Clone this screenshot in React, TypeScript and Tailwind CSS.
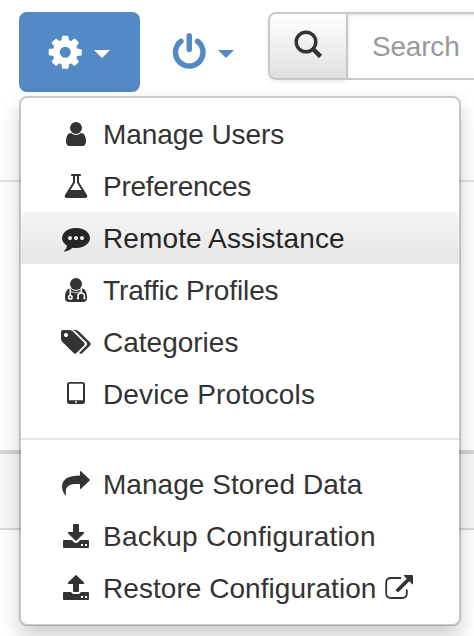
import React from "react";

type IconProps = { children: React.ReactNode; className?: string };

function Glyph({ children, className = "size-7" }: IconProps) {
  return (
    <svg viewBox="0 0 28 28" fill="currentColor" className={`shrink-0 overflow-visible ${className}`}>
      {children}
    </svg>
  );
}

function Fa({ d, className, dx = 0 }: { d: string; className?: string; dx?: number }) {
  return (
    <Glyph className={className}>
      <path transform={`translate(${dx} 0) scale(0.015625)`} d={d} />
    </Glyph>
  );
}

const COG =
  "M1152 896q0-106-75-181t-181-75-181 75-75 181 75 181 181 75 181-75 75-181zm512-109v222q0 12-8 23t-20 13l-185 28q-19 54-39 91 35 50 107 138 10 12 10 25t-9 23q-27 37-99 108t-94 71q-12 0-26-9l-138-108q-44 23-91 38-16 136-29 186-7 28-36 28h-222q-14 0-24.5-8.5t-11.5-21.5l-28-184q-49-16-90-37l-141 107q-10 9-25 9-14 0-25-11-126-114-165-168-7-10-7-23 0-12 8-23 15-21 51-66.5t54-70.5q-27-50-41-99l-183-27q-13-2-21-12.5t-8-23.5v-222q0-12 8-23t19-13l186-28q14-46 39-92-40-57-107-138-10-12-10-24 0-10 9-23 26-36 98.5-107.5t94.5-71.5q13 0 26 10l138 107q44-23 91-38 16-136 29-186 7-28 36-28h222q14 0 24.5 8.5t11.5 21.5l28 184q49 16 90 37l142-107q9-9 24-9 13 0 25 10 129 119 165 170 7 8 7 22 0 12-8 23-15 21-51 66.5t-54 70.5q26 50 41 98l183 28q13 2 21 12.5t8 23.5z";
const POWER =
  "M1664 896q0 156-61 298t-164 245-245 164-298 61-298-61-245-164-164-245-61-298q0-182 80.5-343t226.5-270q43-32 95.5-25t83.5 50q32 42 24.5 94.5t-49.5 84.5q-98 74-151.5 181t-53.5 228q0 104 40.5 198.5t109.5 163.5 163.5 109.5 198.5 40.5 198.5-40.5 163.5-109.5 109.5-163.5 40.5-198.5q0-121-53.5-228t-151.5-181q-42-32-49.5-84.5t24.5-94.5q31-43 84-50t95 25q146 109 226.5 270t80.5 343zm-640-768v640q0 52-38 90t-90 38-90-38-38-90v-640q0-52 38-90t90-38 90 38 38 90z";
const USER =
  "M1536 1399q0 109-62.5 187t-150.5 78h-854q-88 0-150.5-78t-62.5-187q0-85 8.5-160.5t31.5-152 58.5-131 94-89 134.5-34.5q131 128 313 128t313-128q76 0 134.5 34.5t94 89 58.5 131 31.5 152 8.5 160.5zm-256-887q0 159-112.5 271.5t-271.5 112.5-271.5-112.5-112.5-271.5 112.5-271.5 271.5-112.5 271.5 112.5 112.5 271.5z";
const FLASK =
  "M1591 1448q56 89 21.5 152.5t-140.5 63.5h-1152q-106 0-140.5-63.5t21.5-152.5l503-793v-399h-64q-26 0-45-19t-19-45 19-45 45-19h512q26 0 45 19t19 45-19 45-45 19h-64v399zm-779-725l-272 429h712l-272-429-20-31v-436h-128v436z";
const COMMENT =
  "M640 896q0-53-37.5-90.5t-90.5-37.5-90.5 37.5-37.5 90.5 37.5 90.5 90.5 37.5 90.5-37.5 37.5-90.5zm384 0q0-53-37.5-90.5t-90.5-37.5-90.5 37.5-37.5 90.5 37.5 90.5 90.5 37.5 90.5-37.5 37.5-90.5zm384 0q0-53-37.5-90.5t-90.5-37.5-90.5 37.5-37.5 90.5 37.5 90.5 90.5 37.5 90.5-37.5 37.5-90.5zm384 0q0 174-120 321.5t-326 233-450 85.5q-110 0-211-18-173 173-435 229-52 10-86 13-12 1-22-6t-13-18q-4-15 20-37 5-5 23.5-21.5t25.5-23.5 23.5-25.5 24-31.5 20.5-37 20-48 14.5-57.5 12.5-72.5q-146-90-229.5-216.5t-83.5-269.5q0-174 120-321.5t326-233 450-85.5 450 85.5 326 233 120 321.5z";
const TAGS =
  "M448 448q0-53-37.5-90.5t-90.5-37.5-90.5 37.5-37.5 90.5 37.5 90.5 90.5 37.5 90.5-37.5 37.5-90.5zm1067 576q0 53-37 90l-491 492q-39 37-91 37-53 0-90-37l-715-716q-38-37-64.5-101t-26.5-117v-416q0-52 38-90t90-38h416q53 0 117 26.5t102 64.5l715 714q37 39 37 91zm384 0q0 53-37 90l-491 492q-39 37-91 37-36 0-59-14t-53-45l470-470q37-37 37-90 0-52-37-91l-715-714q-38-38-102-64.5t-117-26.5h224q53 0 117 26.5t102 64.5l715 714q37 39 37 91z";

function UserMd() {
  return (
    <Glyph>
      <circle cx="14" cy="8" r="6" />
      <path d="M8.3 12.3Q14 17.5 19.7 12.3C23.5 13 25 17 25 21.7Q25 26 21 26H7Q3 26 3 21.7C3 17 4.5 13 8.3 12.3Z" />
      <g fill="none" stroke="#fff" strokeWidth="1.5">
        <path d="M8.3 12.6V19.4M19.3 12.6V16.5M16 22V20Q16 17 19.2 17T22.4 20V22" />
        <path d="M8.3 14.8Q14 18.8 19.5 14.8" strokeWidth=".7" />
        <circle cx="8.3" cy="21.2" r="1.8" />
      </g>
      <circle cx="16" cy="22.3" r="1.1" fill="#fff" />
      <circle cx="22.4" cy="22.3" r="1.1" fill="#fff" />
    </Glyph>
  );
}

function Tablet() {
  return (
    <Glyph>
      <path fillRule="evenodd" d="M7.5 2H20.5Q23 2 23 4.500V21.500Q23 24 20.500 24H7.500Q5 24 5 21.500V4.500Q5 2 7.500 2ZM7.600 3.800Q7 3.800 7 4.400V19.700Q7 20.200 7.600 20.200H20.400Q21 20.200 21 19.700V4.400Q21 3.800 20.400 3.800ZM14 21A1 1 0 1 0 14 23A1 1 0 1 0 14 21Z" />
    </Glyph>
  );
}

function ShareArrow() {
  return (
    <Glyph>
      <path d="M18 1.5Q18 .5 19 1.2L27.500 9.300Q28.200 10 27.500 10.700L19 18.800Q18 19.500 18 18.500V14.200C9.500 13.600 4.500 15.300 3.800 20.500Q3.600 22.500 4.100 24.700Q4.200 25.700 3.300 25.200C1 22.500 0 19.500 0 16.800C.2 8.500 7 5.700 18 5.500Z" />
    </Glyph>
  );
}

function Tray({ up = false }: { up?: boolean }) {
  return (
    <Glyph>
      {up ? (
        <>
          <path d="M14.700 1.400L22 8.600Q22.600 9.800 21.400 9.900H17V17Q17 18 16 18H12Q11 18 11 17V9.900H6.600Q5.400 9.800 6 8.600L13.300 1.400Q14 .8 14.700 1.400Z" />
          <path fillRule="evenodd" d="M2 18H9.200Q9.700 20 12 20H16Q18.300 20 18.800 18H26Q27 18 27 19V25Q27 26 26 26H2Q1 26 1 25V19Q1 18 2 18ZM19 22V24H21V22ZM23 22V24H25V22Z" />
        </>
      ) : (
        <>
          <path d="M12 2H16Q17 2 17 3V10H21.400Q22.600 10.100 22 11.300L14.700 18.500Q14 19.100 13.300 18.500L6 11.300Q5.400 10.100 6.600 10H11V3Q11 2 12 2Z" />
          <path fillRule="evenodd" d="M2 18H9.600L12 20.300Q14 21.800 16 20.300L18.400 18H26Q27 18 27 19V25Q27 26 26 26H2Q1 26 1 25V19Q1 18 2 18ZM19 22V24H21V22ZM23 22V24H25V22Z" />
        </>
      )}
    </Glyph>
  );
}

function ExternalLink() {
  return (
    <Glyph>
      <path d="M16 4H6Q1.200 4 1.200 8.500V19.500Q1.200 24 6 24H17Q21.800 24 21.800 19.500V15.500" fill="none" stroke="currentColor" strokeWidth="1.800" />
      <path d="M19.500 1H27Q28 1 28 2V9.500Q28 11 27 10L24.300 7.300L13.500 18.100Q13 18.600 12.500 18.100L10.900 16.500Q10.400 16 10.900 15.500L21.700 4.700L19 2Q18 1 19.500 1Z" />
    </Glyph>
  );
}

function Caret({ className }: { className?: string }) {
  return (
    <svg viewBox="0 0 16 8" fill="currentColor" className={`h-2 w-4 shrink-0 ${className ?? ""}`}>
      <path d="M0 0H16L8 8Z" />
    </svg>
  );
}

type ItemProps = {
  icon: React.ReactNode;
  label: string;
  tracking?: string;
  active?: boolean;
  trailing?: React.ReactNode;
};

function Item({ icon, label, tracking = "", active = false, trailing }: ItemProps) {
  return (
    <li className={`flex h-13 items-center pl-[41px] ${active ? "bg-linear-to-b from-[#f5f5f5] to-[#e6e6e6] text-[#262626]" : ""}`}>
      {icon}
      <span className={`ml-[13px] pt-0.5 whitespace-nowrap ${tracking}`}>{label}</span>
      {trailing}
    </li>
  );
}

export default function App() {
  return (
    <div className="relative h-[636px] w-[474px] overflow-hidden bg-white font-['Liberation_Sans',Arial,sans-serif] text-[28px] leading-[40px] text-[#333]">
      <header className="flex h-[180px] items-start pt-3 pl-[19px]">
        <button className="flex h-20 w-[121px] shrink-0 items-center rounded-lg bg-[#5389c5] pl-[27px] text-white">
          <Fa d={COG} className="size-[38.5px]" />
          <Caret className="ml-[9.5px] mt-1" />
        </button>
        <button className="ml-[30px] flex h-20 w-[98px] shrink-0 items-center text-[#5389c5]">
          <Fa d={POWER} className="size-[38.5px]" />
          <Caret className="ml-[9.5px] mt-1" />
        </button>
        <div className="flex h-[68px] w-[240px] shrink-0">
          <button className="flex w-20 shrink-0 items-center justify-center rounded-l-lg border-2 border-[#c8c8c8] bg-linear-to-b from-white to-[#e0e0e0] shadow-[0_2px_4px_rgba(0,0,0,0.08)]">
            <svg viewBox="0 0 28 28" className="size-7 -translate-y-0.5" fill="none" stroke="currentColor">
              <circle cx="12" cy="12" r="9.8" strokeWidth="3.4" />
              <path d="M18.5 18.5L26.500 26.500" strokeWidth="4.5" />
            </svg>
          </button>
          <div className="flex flex-1 items-center border-y-2 border-[#c8c8c8] pt-0.5 pl-6 text-[#999] shadow-[inset_0_2px_2px_rgba(0,0,0,0.075)] tracking-[-0.2px]">
            Search
          </div>
        </div>
      </header>
      <div className="h-0.5 bg-[#e3e3e3]" />
      <div className="h-[268px]" />
      <div className="h-20 border-t-4 border-b-2 border-t-[#d5d5d5] border-b-[#d9d9d9] bg-[#f8f8f8]" />

      <ul className="absolute top-24 left-[19px] h-[530px] w-[442px] rounded-lg border-2 border-black/20 bg-white bg-clip-padding pt-[14px] shadow-[0_10px_20px_rgba(0,0,0,0.2)]">
        <div className="-mt-1">
          <Item icon={<Fa d={USER} />} label="Manage Users" tracking="tracking-[-0.08px]" />
          <Item icon={<Fa d={FLASK} />} label="Preferences" tracking="tracking-[-0.27px]" />
          <Item icon={<Fa d={COMMENT} />} label="Remote Assistance" tracking="tracking-[0.12px]" active />
          <Item icon={<UserMd />} label="Traffic Profiles" tracking="tracking-[-0.12px]" />
          <Item icon={<Fa d={TAGS} dx={-1} />} label="Categories" />
          <Item icon={<Tablet />} label="Device Protocols" tracking="tracking-[0.12px]" />
        </div>
        <li className="my-[18px] h-0.5 bg-[#e5e5e5]" />
        <Item icon={<ShareArrow />} label="Manage Stored Data" tracking="tracking-[0.05px]" />
        <Item icon={<Tray />} label="Backup Configuration" tracking="tracking-[0.25px]" />
        <Item
          icon={<Tray up />}
          label="Restore Configuration"
          tracking="tracking-[0.05px]"
          trailing={<span className="ml-[9px] flex"><ExternalLink /></span>}
        />
      </ul>
    </div>
  );
}
